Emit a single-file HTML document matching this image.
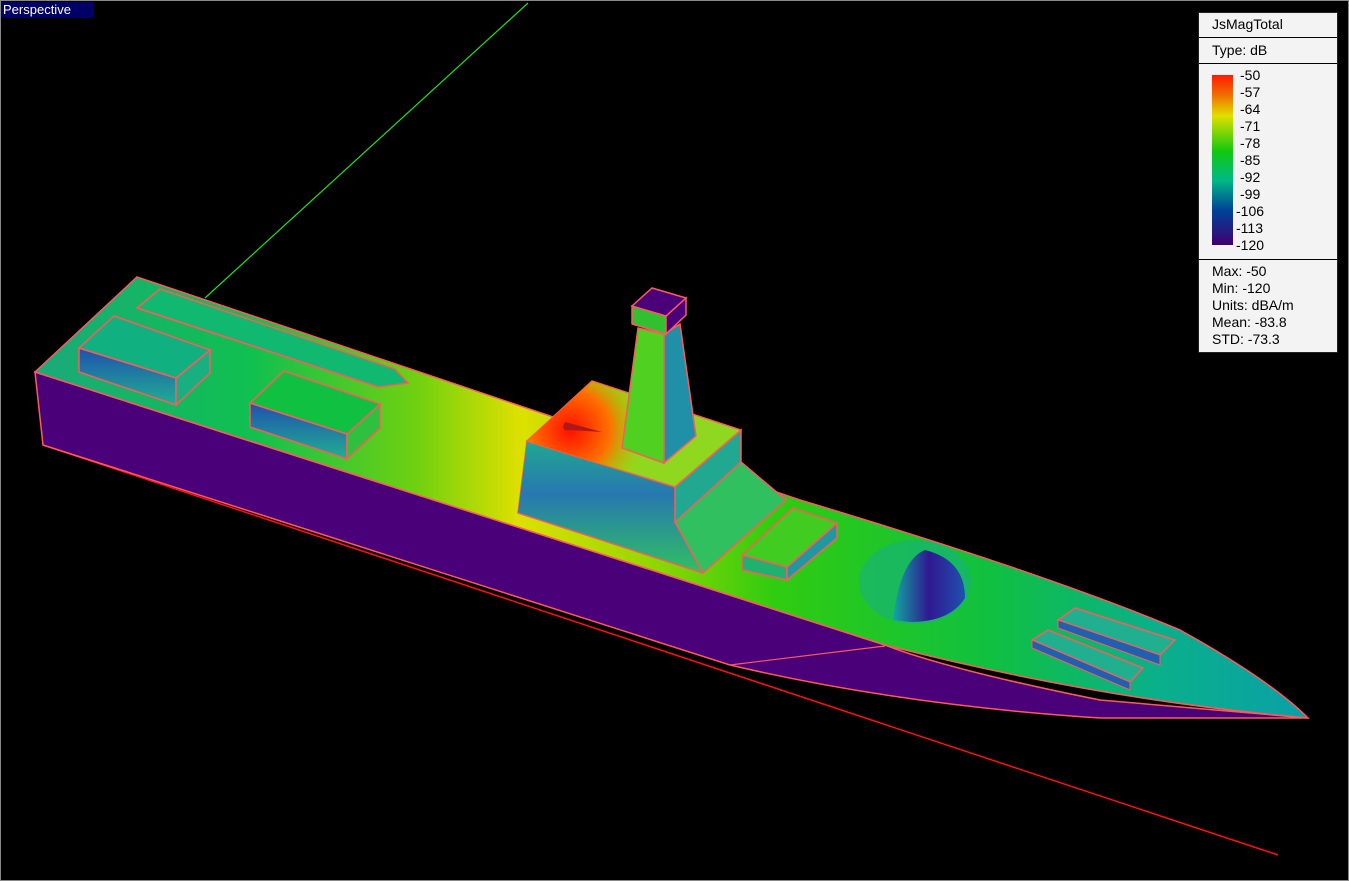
<!DOCTYPE html>
<html><head><meta charset="utf-8"><style>
html,body{margin:0;padding:0;background:#000;}
#v{position:relative;width:1349px;height:881px;overflow:hidden;background:#000;font-family:"Liberation Sans",sans-serif;}
#lbl{position:absolute;left:1px;top:2px;width:91px;height:16px;background:#000066;color:#fff;font-size:13px;line-height:16px;padding-left:2px;}
#leg{position:absolute;left:1198px;top:12px;width:138px;height:339px;background:#f3f3f3;border:1px solid #222;color:#000;font-size:14px;}
#leg .r{position:absolute;left:0;width:138px;border-top:1px solid #000;}
#leg .t{position:absolute;white-space:nowrap;}
</style></head><body><div id="v">
<svg width="1349" height="881" style="position:absolute;left:0;top:0">
<defs>
<linearGradient id="deck" x1="35" y1="0" x2="1308" y2="0" gradientUnits="userSpaceOnUse">
<stop offset="0" stop-color="#1aaa7a"/><stop offset="0.17" stop-color="#10c050"/>
<stop offset="0.3" stop-color="#70d010"/><stop offset="0.38" stop-color="#dde000"/>
<stop offset="0.47" stop-color="#a0d800"/><stop offset="0.58" stop-color="#30cc10"/>
<stop offset="0.75" stop-color="#10c040"/><stop offset="0.88" stop-color="#0ab08a"/>
<stop offset="1" stop-color="#0aa0a8"/></linearGradient>
<radialGradient id="hot" cx="570" cy="430" r="80" gradientUnits="userSpaceOnUse">
<stop offset="0" stop-color="#ff1000"/><stop offset="0.5" stop-color="#ff7000"/><stop offset="1" stop-color="#a0d800" stop-opacity="0"/></radialGradient>
<linearGradient id="face" x1="0" y1="0" x2="0" y2="1"><stop offset="0" stop-color="#2050b0"/><stop offset="1" stop-color="#20b090"/></linearGradient>
<linearGradient id="face2" x1="0" y1="0" x2="0" y2="1"><stop offset="0" stop-color="#20a890"/><stop offset="0.4" stop-color="#2878b0"/><stop offset="1" stop-color="#30c060"/></linearGradient>
<linearGradient id="dome" x1="0" y1="0" x2="1" y2="0"><stop offset="0" stop-color="#10a8a0"/><stop offset="0.5" stop-color="#301890"/><stop offset="1" stop-color="#2050b0"/></linearGradient>
</defs>
<rect x="0.5" y="0.5" width="1348" height="880" fill="none" stroke="#888" stroke-width="1"/>
<line x1="205" y1="298" x2="528" y2="3" stroke="#20e020" stroke-width="1.2"/>
<line x1="43" y1="445" x2="1278" y2="855" stroke="#ff1010" stroke-width="1.5"/>
<path d="M35,372 L43,445 L730,665 Q900,705 1100,718 L1308,718 L1100,700 Q950,670 885,645 Z" fill="#4a0078" stroke="#ff5a5a" stroke-width="1.5"/>
<line x1="730" y1="665" x2="885" y2="646" stroke="#ff5a5a" stroke-width="1.2"/>
<path d="M35,372 L137,277 L800,500 Q1050,575 1180,630 Q1270,680 1308,718 Q1100,700 885,645 Z" fill="url(#deck)" stroke="#ff5a5a" stroke-width="1.5"/>
<path d="M518,513 L527,441 L741,462 L786,500 L703,573 Z" fill="#30c060" stroke="#ff5a5a" stroke-width="1.5"/>
<path d="M527,441 L675,487 L675,522 L703,573 L518,513 Z" fill="url(#face2)"/>
<path d="M675,487 L741,430 L741,462 L675,522 Z" fill="#20a890" stroke="#ff5a5a" stroke-width="1.5"/>
<path d="M527,441 L592,381 L741,430 L675,487 Z" fill="#90d820" stroke="#ff5a5a" stroke-width="1.5"/>
<path d="M527,441 L592,381 L741,430 L675,487 Z" fill="url(#hot)"/>
<line x1="675" y1="522" x2="703" y2="573" stroke="#ff5a5a" stroke-width="1.5"/>
<line x1="518" y1="513" x2="703" y2="573" stroke="#ff5a5a" stroke-width="1.2"/>
<path d="M565,422 Q560,432 570,430 L602,432 Z" fill="#b01818"/>
<path d="M638,328 L664,334 L664,463 L622,448 Z" fill="#50d020" stroke="#ff5a5a" stroke-width="1.5"/>
<path d="M664,334 L680,324 L696,436 L664,463 Z" fill="#2090a8" stroke="#ff5a5a" stroke-width="1.5"/>
<path d="M632,306 L666,316 L666,334 L632,324 Z" fill="#30c030" stroke="#ff5a5a" stroke-width="1.5"/>
<path d="M666,316 L686,298 L686,315 L666,334 Z" fill="#4a0078" stroke="#ff5a5a" stroke-width="1.5"/>
<path d="M632,306 L652,288 L686,298 L666,316 Z" fill="#4a0078" stroke="#ff5a5a" stroke-width="1.5"/>
<path d="M742,555 L787,567 L787,580 L742,570 Z" fill="#20b070" stroke="#ff5a5a" stroke-width="1.5"/>
<path d="M787,567 L837,523 L837,538 L787,580 Z" fill="#2098a0" stroke="#ff5a5a" stroke-width="1.5"/>
<path d="M742,555 L793,508 L837,523 L787,567 Z" fill="#40cc20" stroke="#ff5a5a" stroke-width="1.5"/>
<ellipse cx="915" cy="582" rx="56" ry="42" fill="#18b080" opacity="0.6"/>
<path d="M893,620 Q900,560 925,550 Q965,560 965,598 Q950,622 910,622 Z" fill="url(#dome)"/>
<path d="M1058,620 L1075,608 L1175,640 L1160,655 Z" fill="#20b090" stroke="#ff5a5a" stroke-width="1.5"/>
<path d="M1058,620 L1160,655 L1160,665 L1058,628 Z" fill="#2060b0" stroke="#ff5a5a" stroke-width="1"/>
<path d="M1032,640 L1048,630 L1143,668 L1130,682 Z" fill="#20b090" stroke="#ff5a5a" stroke-width="1.5"/>
<path d="M1032,640 L1130,682 L1130,690 L1032,648 Z" fill="#2060b0" stroke="#ff5a5a" stroke-width="1"/>
<path d="M137,308 L160,289 L395,369 L408,383 L378,387 Z" fill="#10b870" stroke="#ff5a5a" stroke-width="1.5"/>
<line x1="137" y1="308" x2="378" y2="387" stroke="#ff5a5a" stroke-width="1.5"/>
<path d="M79,348 L176,378 L176,405 L79,372 Z" fill="url(#face)" stroke="#ff5a5a" stroke-width="1.5"/>
<path d="M176,378 L210,350 L210,373 L176,405 Z" fill="#18b080" stroke="#ff5a5a" stroke-width="1.5"/>
<path d="M79,348 L114,316 L210,350 L176,378 Z" fill="#10b080" stroke="#ff5a5a" stroke-width="1.5"/>
<path d="M250,403 L347,434 L347,459 L250,427 Z" fill="url(#face)" stroke="#ff5a5a" stroke-width="1.5"/>
<path d="M347,434 L380,404 L380,428 L347,459 Z" fill="#30c040" stroke="#ff5a5a" stroke-width="1.5"/>
<path d="M250,403 L284,371 L380,404 L347,434 Z" fill="#10c040" stroke="#ff5a5a" stroke-width="1.5"/>
</svg>
<div id="lbl">Perspective</div>
<div id="leg">
<div class="t" style="left:13px;top:3px">JsMagTotal</div>
<div class="r" style="top:24px"></div>
<div class="t" style="left:13px;top:29px">Type: dB</div>
<div class="r" style="top:50px"></div>
<div style="position:absolute;left:13px;top:62px;width:21px;height:170px;background:linear-gradient(#ff1a00,#f07000 12%,#e0e000 24%,#10c810 45%,#00b888 62%,#004098 80%,#400070)"></div>
<div class="t" style="left:41px;top:54px;line-height:17px">-50<br>-57<br>-64<br>-71<br>-78<br>-85<br>-92<br>-99</div>
<div class="t" style="left:37px;top:190px;line-height:17px">-106<br>-113<br>-120</div>
<div class="r" style="top:246px"></div>
<div class="t" style="left:13px;top:250px;line-height:17px">Max: -50<br>Min: -120<br>Units: dBA/m<br>Mean: -83.8<br>STD: -73.3</div>
</div>
</div></body></html>
